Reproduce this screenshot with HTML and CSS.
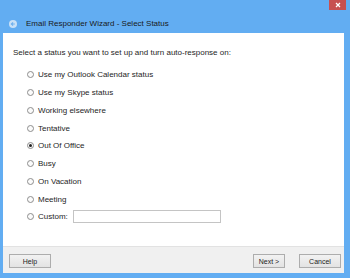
FILE: index.html
```html
<!DOCTYPE html>
<html lang="en">
<head>
  <meta charset="UTF-8" />
  <meta name="viewport" content="width=device-width, initial-scale=1.0" />
  <title>Email Responder Wizard - Select Status</title>
  <link rel="stylesheet" href="styles.css">
</head>
<body>
  <div class="window">
    <div class="titlebar">
      <span class="back-btn">
        <svg width="8" height="8" viewBox="0 0 8 8">
          <circle cx="4" cy="4" r="4" fill="#c9e1f7"/>
          <path d="M5.8 4H2.4M4 2.3L2.3 4L4 5.7" stroke="#6fb0ee" stroke-width="1.1" fill="none"/>
        </svg>
      </span>
      <span class="title">Email Responder Wizard - Select Status</span>
      <span class="close-btn">
        <svg width="6" height="6" viewBox="0 0 6 6">
          <path d="M1 1L5 5M5 1L1 5" stroke="#fff" stroke-width="1.2"/>
        </svg>
      </span>
    </div>

    <div class="client">
      <div class="content">
        <p class="prompt">Select a status you want to set up and turn auto-response on:</p>

        <div class="options">
          <label class="option"><span class="radio"></span>Use my Outlook Calendar status</label>
          <label class="option"><span class="radio"></span>Use my Skype status</label>
          <label class="option"><span class="radio"></span>Working elsewhere</label>
          <label class="option"><span class="radio"></span>Tentative</label>
          <label class="option"><span class="radio checked"></span>Out Of Office</label>
          <label class="option"><span class="radio"></span>Busy</label>
          <label class="option"><span class="radio"></span>On Vacation</label>
          <label class="option"><span class="radio"></span>Meeting</label>
          <label class="option"><span class="radio"></span>Custom:<span class="custom-input"></span></label>
        </div>
      </div>

      <div class="footer">
        <button class="btn">Help</button>
        <div class="footer-right">
          <button class="btn btn-next">Next &gt;</button>
          <button class="btn">Cancel</button>
        </div>
      </div>
    </div>
  </div>
</body>
</html>
```

FILE: styles.css
```css
body {
  margin: 0;
  background-color: #62adf2;
  font-family: 'Liberation Sans', Arial, sans-serif;
  font-size: 8px;
  color: #1e1e1e;
}

.window {
  width: 350px;
  height: 278px;
  display: flex;
  flex-direction: column;
}

.titlebar {
  height: 33px;
  display: flex;
  align-items: flex-start;
}

.back-btn {
  margin: 20px 0 0 9px;
  width: 8px;
  height: 8px;
  display: flex;
}

.title {
  margin: 19px 0 0 9px;
  font-size: 8px;
  color: #1a1a1a;
}

.close-btn {
  margin-left: auto;
  margin-right: 4px;
  width: 17px;
  height: 10px;
  background-color: #c75050;
  display: flex;
  align-items: center;
  justify-content: center;
}

.client {
  flex: 1;
  margin: 0 6px 5px 3px;
  background: white;
  display: flex;
  flex-direction: column;
}

.content {
  flex: 1;
  padding: 15px 10px 0 10px;
}

.prompt {
  margin: 0 0 8px;
  line-height: 10px;
}

.options {
  display: flex;
  flex-direction: column;
  padding-left: 14px;
}

.option {
  height: 17.75px;
  display: flex;
  align-items: center;
}

.radio {
  width: 5px;
  height: 5px;
  border: 1px solid #8d8d8d;
  border-radius: 50%;
  margin-right: 4px;
  display: flex;
  align-items: center;
  justify-content: center;
  background: #fbfbfb;
}

.radio.checked::after {
  content: "";
  width: 3px;
  height: 3px;
  border-radius: 50%;
  background: #222;
}

.custom-input {
  margin-left: 5px;
  width: 146px;
  height: 11px;
  border: 1px solid #c4c4c4;
  background: white;
}

.footer {
  height: 27px;
  box-sizing: border-box;
  border-top: 1px solid #e2e2e2;
  background-color: #f0f0f0;
  display: flex;
  align-items: flex-start;
  padding: 7px 3px 0 6px;
}

.footer-right {
  margin-left: auto;
  display: flex;
  gap: 14px;
}

.btn {
  width: 42px;
  height: 14px;
  padding: 0;
  font-family: inherit;
  font-size: 7px;
  color: #222;
  border: 1px solid #adadad;
  background: linear-gradient(#f2f2f2, #e3e3e3);
}

.btn-next {
  width: 32px;
}
```
